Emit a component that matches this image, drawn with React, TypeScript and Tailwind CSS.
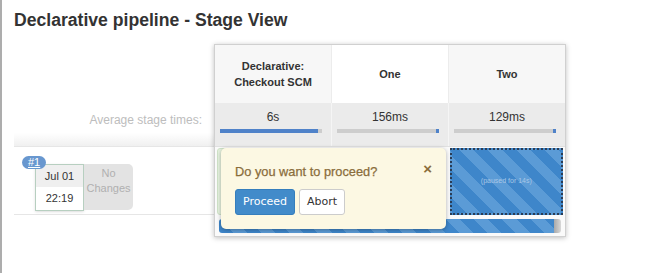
import React from "react";

const stages = [
  { name: ["Declarative:", "Checkout SCM"], avg: "6s", fill: "w-[96%]", head: "bg-[#f7f7f7]" },
  { name: ["One"], avg: "156ms", fill: "w-[3%] ml-auto", head: "bg-white" },
  { name: ["Two"], avg: "129ms", fill: "w-[3%] ml-auto", head: "bg-[#f7f7f7]" },
];

const stripes =
  "bg-[repeating-linear-gradient(45deg,#3e86ca_0px,#3e86ca_10px,#5b9bd6_10px,#5b9bd6_20px)]";

export default function App() {
  return (
    <div className="relative h-[273px] w-[669px] overflow-hidden border-l-2 border-[#adadad] bg-white font-['Liberation_Sans',Arial,sans-serif]">
      <h1 className="pl-[12px] pt-[9px] text-[17.6px] leading-[22px] font-bold text-[#333]">
        Declarative pipeline - Stage View
      </h1>

      <div className="mt-[13px] ml-[12px] flex">
        {/* left labels column */}
        <div className="w-[200px] shrink-0">
          <div className="h-[58px]" />
          <div className="flex h-[44px] items-start justify-end bg-gradient-to-b from-white from-70% to-[#f0f0f0] pt-[9px] pr-[12px] text-[12px] text-[#bdbdbd]">
            Average stage times:
          </div>
          <div className="relative h-[69px] border-y border-[#e6e6e6] bg-white">
            <span className="absolute top-[9px] left-[8px] z-10 rounded-full bg-[#6897cf] px-[6px] text-[11px] leading-[13px] text-white underline">
              #1
            </span>
            <div className="absolute top-[17px] left-[21px] flex">
              <div className="w-[49px] border border-[#b7cfc0] bg-white text-center text-[11px] text-[#333] shadow-sm">
                <div className="h-[22px] bg-[#efefef] leading-[22px]">Jul 01</div>
                <div className="h-[23px] leading-[23px]">22:19</div>
              </div>
              <div className="h-[46px] w-[49px] rounded-r-[5px] bg-[#e3e3e3] pt-[2px] text-center text-[11px] leading-[15px] text-[#b0b0b0]">
                No
                <br />
                Changes
              </div>
            </div>
          </div>
        </div>

        {/* stage table */}
        <div className="relative w-[352px] shrink-0 border border-[#d0d0d0] shadow-[0_1px_5px_rgba(0,0,0,0.25)]">
          <div className="flex h-[58px]">
            {stages.map((s) => (
              <div
                key={s.avg}
                className={`flex flex-1 flex-col items-center justify-center border-r border-[#ececec] text-[11px] leading-[16px] font-bold text-[#333] last:border-r-0 ${s.head}`}
              >
                {s.name.map((n) => (
                  <span key={n}>{n}</span>
                ))}
              </div>
            ))}
          </div>
          <div className="flex h-[43px] bg-[#ebebeb]">
            {stages.map((s) => (
              <div key={s.avg} className="flex-1 border-r border-[#f5f5f5] px-[5px] pt-[7px] last:border-r-0">
                <div className="text-center text-[12px] leading-[14px] text-[#333]">{s.avg}</div>
                <div className="mt-[5px] mr-[4px] h-[4px] bg-[#cdcdcd]">
                  <div className={`h-full bg-[#4f82c9] ${s.fill}`} />
                </div>
              </div>
            ))}
          </div>
          <div className="relative h-[90px] border-t border-[#e0e0e0] bg-[#fafafa]">
            <div className="flex h-[68px] gap-[6px] px-[2px] pt-[1px]">
              <div className="flex-1 rounded-[3px] border border-[#cfe3c8] bg-[#e6f2df]" />
              <div className="flex-1" />
              <div className={`flex flex-1 items-center justify-center border-2 border-dotted border-[#2b3d55] ${stripes}`}>
                <span className="text-[7px] text-[#a9c7e6]">(paused for 14s)</span>
              </div>
            </div>
            <div className="mx-[4px] mt-[4px] flex h-[14px] overflow-hidden rounded-[3px]">
              <div className={`flex-1 ${stripes}`} />
              <div className="w-[7px] bg-gradient-to-r from-[#a9a9a9] to-[#d8d8d8]" />
            </div>

            {/* input popover */}
            <div className="absolute top-[1px] left-[6px] h-[81px] w-[225px] rounded-[5px] bg-[#fcf8e3] px-[14px] pt-[16px] shadow-[0_1px_4px_rgba(0,0,0,0.3)]">
              <div className="flex items-start justify-between">
                <span className="text-[12.8px] leading-[16px] text-[#8a6d3b] [-webkit-text-stroke:0.25px_#8a6d3b]">
                  Do you want to proceed?
                </span>
                <span className="mt-[-3px] text-[15px] leading-[16px] font-bold text-[#8a6d3b]">×</span>
              </div>
              <div className="mt-[9px] flex gap-[4px]">
                <button className="h-[26px] rounded-[3px] border border-[#357ebd] bg-[#428bca] px-[7px] font-['DejaVu_Sans',sans-serif] text-[11px] text-white">
                  Proceed
                </button>
                <button className="h-[26px] rounded-[3px] border border-[#ccc] bg-white px-[7px] font-['DejaVu_Sans',sans-serif] text-[11px] text-[#333]">
                  Abort
                </button>
              </div>
            </div>
          </div>
        </div>
      </div>
    </div>
  );
}
